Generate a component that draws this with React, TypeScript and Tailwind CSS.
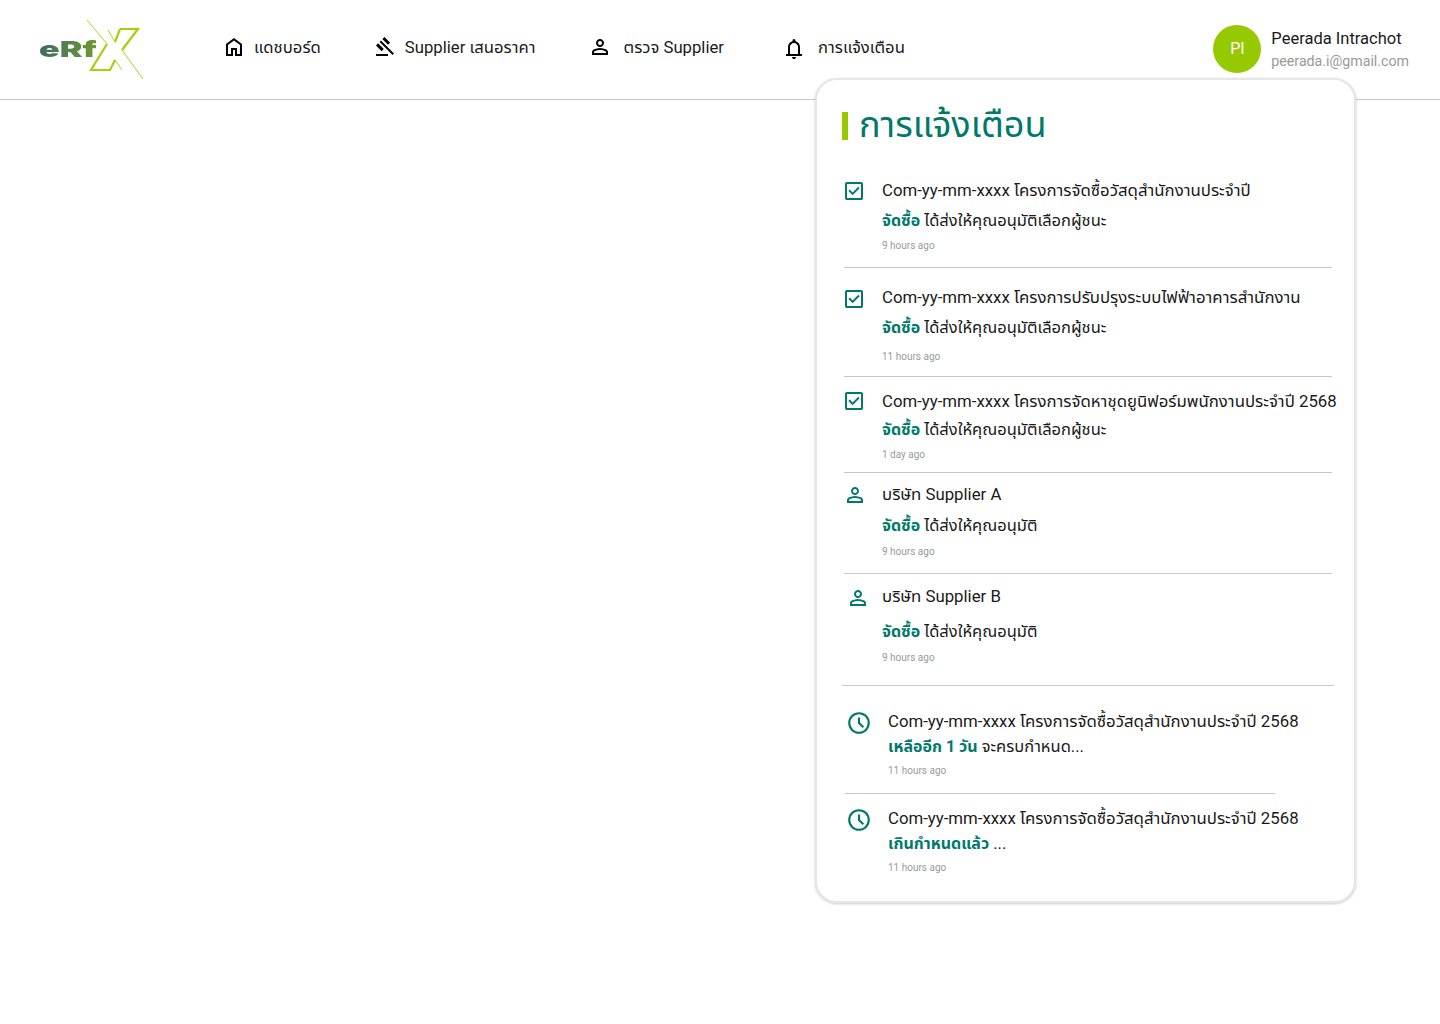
const font = "font-['Roboto','Noto_Sans_Thai',sans-serif]";

function HomeIcon() {
  return (
    <svg viewBox="0 0 24 24" className="w-6 h-6 mb-[2px] fill-black shrink-0">
      <path d="M6 19h3v-6h6v6h3v-9l-6-4.5L6 10v9Zm-2 2V9l8-6 8 6v12h-7v-6h-2v6H4Z" />
    </svg>
  );
}

function GavelIcon() {
  return (
    <svg viewBox="0 0 24 24" className="w-6 h-6 fill-black shrink-0">
      <path d="M4 21v-2h12v2H4Zm5.65-4.85L4 10.5l2.1-2.15 5.7 5.65-2.15 2.15ZM16 9.8l-5.65-5.7L12.5 2l5.65 5.65L16 9.8ZM20.6 20l-13-13L9 5.6l13 13-1.4 1.4Z" />
    </svg>
  );
}

function PersonIcon({ className }: { className: string }) {
  return (
    <svg viewBox="0 0 24 24" className={className}>
      <path d="M12 12q-1.65 0-2.825-1.175T8 8q0-1.65 1.175-2.825T12 4q1.65 0 2.825 1.175T16 8q0 1.65-1.175 2.825T12 12Zm-8 8v-2.8q0-.85.438-1.563T5.6 14.55q1.55-.775 3.15-1.163T12 13q1.65 0 3.25.387t3.15 1.163q.725.375 1.163 1.087T20 17.2V20H4Zm2-2h12v-.8q0-.275-.138-.5t-.362-.35q-1.35-.675-2.725-1.012T12 15q-1.4 0-2.775.338T6.5 16.35q-.225.125-.363.35T6 17.2v.8Zm6-8q.825 0 1.413-.588T14 8q0-.825-.588-1.413T12 6q-.825 0-1.413.588T10 8q0 .825.588 1.413T12 10Z" />
    </svg>
  );
}

function BellIcon() {
  return (
    <svg viewBox="0 0 24 24" className="w-6 h-6 mt-[2px] fill-black shrink-0">
      <path d="M4 19v-2h2v-7q0-2.075 1.25-3.688T10.5 4.2v-.7q0-.625.438-1.062T12 2q.625 0 1.063.438T13.5 3.5v.7q2 .5 3.25 2.113T18 10v7h2v2H4ZM12 22q-.825 0-1.413-.588T10 20h4q0 .825-.588 1.413T12 22Zm-4-5h8v-7q0-1.65-1.175-2.825T12 6q-1.65 0-2.825 1.175T8 10v7Z" />
    </svg>
  );
}

function CheckIcon({ top }: { top: string }) {
  return (
    <svg viewBox="0 0 24 24" className={`w-6 h-6 ml-[-2px] mr-[16px] shrink-0 fill-[#00796b] ${top}`}>
      <path d="m10.6 16.2 7.05-7.05-1.4-1.4-5.65 5.65-2.85-2.85-1.4 1.4 4.25 4.25ZM5 21q-.825 0-1.413-.588T3 19V5q0-.825.588-1.413T5 3h14q.825 0 1.413.588T21 5v14q0 .825-.588 1.413T19 21H5Zm0-2h14V5H5v14Z" />
    </svg>
  );
}

function ClockIcon() {
  return (
    <svg viewBox="0 0 24 24" className="w-[26px] h-[26px] ml-px mr-[16px] mt-[-1px] shrink-0 fill-[#00796b]">
      <path d="m15.3 16.7 1.4-1.4-3.7-3.7V7h-2v5.4l4.3 4.3ZM12 22q-2.075 0-3.9-.788t-3.175-2.137q-1.35-1.35-2.138-3.175T2 12q0-2.075.788-3.9t2.137-3.175q1.35-1.35 3.175-2.138T12 2q2.075 0 3.9.788t3.175 2.137q1.35 1.35 2.138 3.175T22 12q0 2.075-.788 3.9t-2.137 3.175q-1.35 1.35-3.175 2.138T12 22Zm0-2q3.325 0 5.663-2.337T20 12q0-3.325-2.337-5.663T12 4Q8.675 4 6.337 6.337T4 12q0 3.325 2.337 5.663T12 20Z" />
    </svg>
  );
}

function Logo() {
  return (
    <div className="relative w-[115px] h-[70px] shrink-0">
      <svg viewBox="0 0 115 70" className="w-[115px] h-[70px] fill-none stroke-[#a3d10a]">
        <path d="M52 5L72 29M87 35L108 64M80 45L87 55M73 15L80 27" strokeWidth="0.9" />
        <path d="M85 14H103L87 35M80 27L85 14M72 29L56 55H75L80 45" strokeWidth="2.2" />
      </svg>
      <span className="absolute left-[4px] top-[19px] text-[22px] leading-[30px] font-black font-['Inter',sans-serif] scale-x-[1.55] origin-left bg-gradient-to-r from-[#3f6b5d] to-[#6d9a2a] bg-clip-text text-transparent">
        eRf
      </span>
    </div>
  );
}

function Row({
  className,
  icon,
  line1,
  line2,
  time,
  line2Gap,
  timeGap,
}: {
  className: string;
  icon: React.ReactNode;
  line1: string;
  line2: React.ReactNode;
  time: string;
  line2Gap: string;
  timeGap: string;
}) {
  return (
    <div className={`flex ${className}`}>
      {icon}
      <div className="flex flex-col whitespace-nowrap">
        <div className="h-5 leading-5 text-[16.8px] text-[#1a1a1a]">{line1}</div>
        <div className={`h-5 leading-5 text-[16.5px] text-[#1a1a1a] ${line2Gap}`}>{line2}</div>
        <div className={`h-[14px] leading-[14px] text-[10px] text-[#9a9a9a] ${timeGap}`}>{time}</div>
      </div>
    </div>
  );
}

function Strong({ children }: { children: React.ReactNode }) {
  return <span className="font-bold text-[16px] text-[#00796b]">{children}</span>;
}

export default function App() {
  return (
    <div className={`relative w-full h-[1024px] bg-white ${font}`}>
      <header className="h-[100px] border-b border-[#c8c8c8] flex items-center pl-[35px] pr-[31px]">
        <Logo />
        <nav className="flex items-center ml-[72px] mb-[4px] text-[16.7px] text-[#1a1a1a]">
          <div className="flex items-center gap-2">
            <HomeIcon />
            <span>แดชบอร์ด</span>
          </div>
          <div className="flex items-center gap-[9px] ml-[51px]">
            <GavelIcon />
            <span>Supplier เสนอราคา</span>
          </div>
          <div className="flex items-center gap-3 ml-[52px]">
            <PersonIcon className="w-6 h-6 fill-black shrink-0" />
            <span>ตรวจ Supplier</span>
          </div>
          <div className="flex items-center gap-3 ml-[58px]">
            <BellIcon />
            <span>การแจ้งเตือน</span>
          </div>
        </nav>
        <div className="ml-auto mb-[2px] flex items-center gap-[10px]">
          <div className="w-12 h-12 rounded-full bg-[#97c900] flex items-center justify-center text-white text-[16px]">
            PI
          </div>
          <div className="flex flex-col mt-[2px]">
            <span className="text-[16.5px] leading-5 text-[#1a1a1a]">Peerada Intrachot</span>
            <span className="text-[14.2px] leading-5 mt-[2px] text-[#999999]">peerada.i@gmail.com</span>
          </div>
        </div>
      </header>

      <div className="absolute left-[815px] top-[78px] w-[541px] h-[825px] bg-white border-2 border-[#e6e6e6] rounded-[22px] shadow-[0_1px_3px_rgba(0,0,0,0.2)]">
        <div className="flex items-center gap-[11px] ml-[25px] mt-[32px] h-[28px]">
          <div className="w-[6px] h-[28px] bg-[#97c900]" />
          <h2 className="text-[36px] leading-[28px] -mt-[2px] font-normal text-[#00796b] whitespace-nowrap">การแจ้งเตือน</h2>
        </div>
        <div className="mt-[40px]">
          <Row
            className="ml-[27px] pb-[14px] mr-[22px] border-b border-[#c8c8c8]"
            icon={<CheckIcon top="mt-[-1px]" />}
            line1="Com-yy-mm-xxxx โครงการจัดซื้อวัสดุสำนักงานประจำปี"
            line2={<><Strong>จัดซื้อ</Strong> ได้ส่งให้คุณอนุมัติเลือกผู้ชนะ</>}
            time="9 hours ago"
            line2Gap="mt-[11px]"
            timeGap="mt-2"
          />
          <Row
            className="ml-[27px] pt-[19px] pb-[12px] mr-[22px] border-b border-[#c8c8c8]"
            icon={<CheckIcon top="mt-0" />}
            line1="Com-yy-mm-xxxx โครงการปรับปรุงระบบไฟฟ้าอาคารสำนักงาน"
            line2={<><Strong>จัดซื้อ</Strong> ได้ส่งให้คุณอนุมัติเลือกผู้ชนะ</>}
            time="11 hours ago"
            line2Gap="mt-[11px]"
            timeGap="mt-3"
          />
          <Row
            className="ml-[27px] pt-[14px] pb-[10px] mr-[22px] border-b border-[#c8c8c8]"
            icon={<CheckIcon top="mt-[-2px]" />}
            line1="Com-yy-mm-xxxx โครงการจัดหาชุดยูนิฟอร์มพนักงานประจำปี 2568"
            line2={<><Strong>จัดซื้อ</Strong> ได้ส่งให้คุณอนุมัติเลือกผู้ชนะ</>}
            time="1 day ago"
            line2Gap="mt-[9px]"
            timeGap="mt-2"
          />
          <Row
            className="ml-[27px] pt-[11px] pb-[14px] mr-[22px] border-b border-[#c8c8c8]"
            icon={<PersonIcon className="w-6 h-6 ml-[-1px] mr-[15px] mt-[-1px] shrink-0 fill-[#00796b]" />}
            line1="บริษัท Supplier A"
            line2={<><Strong>จัดซื้อ</Strong> ได้ส่งให้คุณอนุมัติ</>}
            time="9 hours ago"
            line2Gap="mt-[12px]"
            timeGap="mt-[9px]"
          />
          <Row
            className="ml-[25px] pt-3 pb-[20px] mr-[20px] border-b border-[#c8c8c8]"
            icon={<PersonIcon className="w-6 h-6 ml-[4px] mr-[12px] shrink-0 fill-[#00796b]" />}
            line1="บริษัท Supplier B"
            line2={<><Strong>จัดซื้อ</Strong> ได้ส่งให้คุณอนุมัติ</>}
            time="9 hours ago"
            line2Gap="mt-[16px]"
            timeGap="mt-[9px]"
          />
          <Row
            className="ml-[28px] pt-[25px] pb-[15px] mr-[79px] border-b border-[#c8c8c8]"
            icon={<ClockIcon />}
            line1="Com-yy-mm-xxxx โครงการจัดซื้อวัสดุสำนักงานประจำปี 2568"
            line2={<><Strong>เหลืออีก 1 วัน</Strong> จะครบกำหนด...</>}
            time="11 hours ago"
            line2Gap="mt-[6px]"
            timeGap="mt-[7px]"
          />
          <Row
            className="ml-[28px] pt-[14px]"
            icon={<ClockIcon />}
            line1="Com-yy-mm-xxxx โครงการจัดซื้อวัสดุสำนักงานประจำปี 2568"
            line2={<><Strong>เกินกำหนดแล้ว</Strong> ...</>}
            time="11 hours ago"
            line2Gap="mt-[6px]"
            timeGap="mt-[7px]"
          />
        </div>
      </div>
    </div>
  );
}
